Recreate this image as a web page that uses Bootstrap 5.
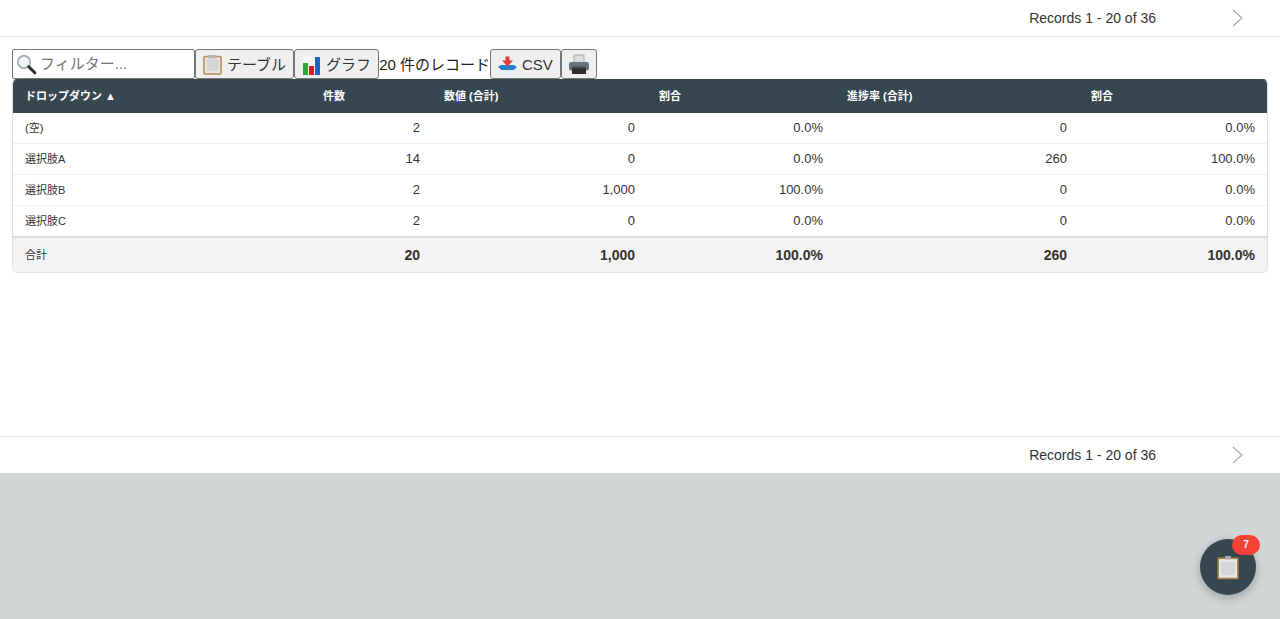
<!DOCTYPE html>
<html lang="ja"><head><meta charset="utf-8">
<link rel="stylesheet" href="https://cdn.jsdelivr.net/npm/bootstrap@5.3.0/dist/css/bootstrap.min.css">
<style>
html,body{height:619px;overflow:hidden}
body{background:#d1d5d6;font-family:"Liberation Sans","Noto Sans CJK JP",sans-serif;color:#333}
.sheet{background:#fff;height:473px;display:flex;flex-direction:column}
.pager{height:37px;display:flex;align-items:center;justify-content:flex-end;font-size:14px;color:#333;flex:none}
.pager-top{border-bottom:1px solid #e3e3e3}
.pager-bottom{border-top:1px solid #e3e3e3;margin-top:auto}
.pager-text{margin-right:74px}
.pager-arrow{width:16px;height:20px;margin-right:34px;display:block}
.tools{display:flex;align-items:stretch;height:30px;margin:12px 12px 0;font-size:15px;line-height:30px;color:#222;white-space:nowrap;flex:none}
.tools-count{padding-top:1px}
.filter-box{width:183px;border:1px solid #767676;border-radius:2px;display:flex;align-items:center;padding-left:3px;gap:3px;color:#757575}
.tool-btn{border:1px solid #767676;border-radius:3px;background:#efefef;color:#333;display:flex;align-items:center;gap:5px;padding:1px 7px 0;font-size:15px;line-height:1}
.report{margin:0 12px;border:1px solid #e0e0e0;border-top-color:#37474f;border-radius:5px;overflow:hidden;flex:none}
.report-table{width:1254px;table-layout:fixed;border-collapse:separate;border-spacing:0;font-size:13px;color:#333}
.report-table th{background:#37474f;color:#fff;font-size:11px;font-weight:700;height:33px;padding:0 12px;text-align:left;border:0}
.report-table td{height:31px;padding:0 12px;text-align:right;border-bottom:1px solid #eee}
.report-table td:first-child{text-align:left;font-size:11px}
.report-table tbody tr:last-child td{height:30px;border-bottom:0}
.report-table tfoot td{height:36px;background:#f4f4f4;font-weight:700;border-top:2px solid #ddd;border-bottom:0;font-size:14px}
.report-table tfoot td:first-child{font-weight:400;font-size:11px}
.fab{position:absolute;left:1200px;top:539px;width:56px;height:56px;border-radius:50%;background:#37474f;box-shadow:0 3px 10px rgba(0,0,0,.25);display:flex;align-items:center;justify-content:center}
.fab-count{position:absolute;left:32px;top:-4px;width:28px;height:20px;border-radius:10px;background:#f44336;color:#fff;font-size:10px;font-weight:700;text-align:center;line-height:20px}
</style></head><body>
<div class="sheet">
<div class="pager pager-top"><span class="pager-text">Records 1 - 20 of 36</span><svg class="pager-arrow" viewBox="0 0 16 20"><path d="M3 2l9 8-9 8" fill="none" stroke="#aaa" stroke-width="1.2"/></svg></div>
<div class="tools">
<div class="filter-box"><svg width="21" height="21" viewBox="0 0 21 21"><circle cx="8" cy="8" r="6.2" fill="#eef3f6" stroke="#93a0a8" stroke-width="1.5"/><path d="M12.8 12.8l6 6" stroke="#2b2b2b" stroke-width="3" stroke-linecap="round"/></svg><span>フィルター...</span></div>
<button class="tool-btn" type="button"><svg width="19" height="21" viewBox="0 0 19 21"><rect x="1" y="2.5" width="17" height="17.5" rx="1" fill="#e9e7df" stroke="#b48a52" stroke-width="1.5"/><rect x="3.5" y="5.5" width="12" height="11.5" fill="#d6d6d6"/><rect x="5.5" y="1" width="8" height="3.5" fill="#b5b5b5"/></svg>テーブル</button>
<button class="tool-btn" type="button"><svg width="19" height="20" viewBox="0 0 19 20"><rect x="1" y="1" width="17" height="18" fill="#f6f6f6"/><rect x="1" y="8" width="5" height="12" fill="#2aa83e"/><rect x="7" y="11" width="5" height="9" fill="#c8201f"/><rect x="13" y="2" width="5" height="18" fill="#1e62c4"/></svg>グラフ</button>
<span class="tools-count">20 件のレコード</span>
<button class="tool-btn" type="button"><svg width="19" height="20" viewBox="0 0 19 20"><path d="M0 12l4-3h11l4 3v7H0z" fill="#e8edf0"/><path d="M3 10h13l3 2-3.5 3h-12L0 12z" fill="#2a7fc9"/><path d="M7.5 1.5h4v4H15l-5.5 6-5.5-6h3.5z" fill="#e23a3a"/></svg>CSV</button>
<button class="tool-btn" type="button"><svg width="20" height="21" viewBox="0 0 20 21"><rect x="5" y="1" width="10" height="8" fill="#dcdcdc" stroke="#a0a0a0" stroke-width=".8"/><rect x="0" y="8" width="20" height="8.5" rx="2" fill="#69757c"/><rect x="3" y="14" width="14" height="6" fill="#2e2e2e"/><rect x="3" y="12.5" width="14" height="1.2" fill="#3a4348"/></svg></button>
</div>
<div class="report">
<table class="report-table">
<colgroup><col style="width:298px"><col style="width:121px"><col style="width:215px"><col style="width:188px"><col style="width:244px"><col style="width:188px"></colgroup>
<thead><tr><th>ドロップダウン ▲</th><th>件数</th><th>数値 (合計)</th><th>割合</th><th>進捗率 (合計)</th><th>割合</th></tr></thead>
<tbody>
<tr><td>(空)</td><td>2</td><td>0</td><td>0.0%</td><td>0</td><td>0.0%</td></tr>
<tr><td>選択肢A</td><td>14</td><td>0</td><td>0.0%</td><td>260</td><td>100.0%</td></tr>
<tr><td>選択肢B</td><td>2</td><td>1,000</td><td>100.0%</td><td>0</td><td>0.0%</td></tr>
<tr><td>選択肢C</td><td>2</td><td>0</td><td>0.0%</td><td>0</td><td>0.0%</td></tr>
</tbody>
<tfoot><tr><td>合計</td><td>20</td><td>1,000</td><td>100.0%</td><td>260</td><td>100.0%</td></tr></tfoot>
</table>
</div>
<div class="pager pager-bottom"><span class="pager-text">Records 1 - 20 of 36</span><svg class="pager-arrow" viewBox="0 0 16 20"><path d="M3 2l9 8-9 8" fill="none" stroke="#aaa" stroke-width="1.2"/></svg></div>
</div>
<div class="fab"><svg width="22" height="25" viewBox="0 0 19 21"><rect x="1" y="2.5" width="17" height="17.5" fill="#e9e7df" stroke="#a5814a" stroke-width="1.4"/><rect x="3.5" y="5.5" width="12" height="11.5" fill="#d6d6d6"/><rect x="7" y="0.5" width="5" height="3" fill="#aaa"/></svg><span class="fab-count">7</span></div>
<script src="https://cdn.jsdelivr.net/npm/bootstrap@5.3.0/dist/js/bootstrap.bundle.min.js"></script>
</body></html>
